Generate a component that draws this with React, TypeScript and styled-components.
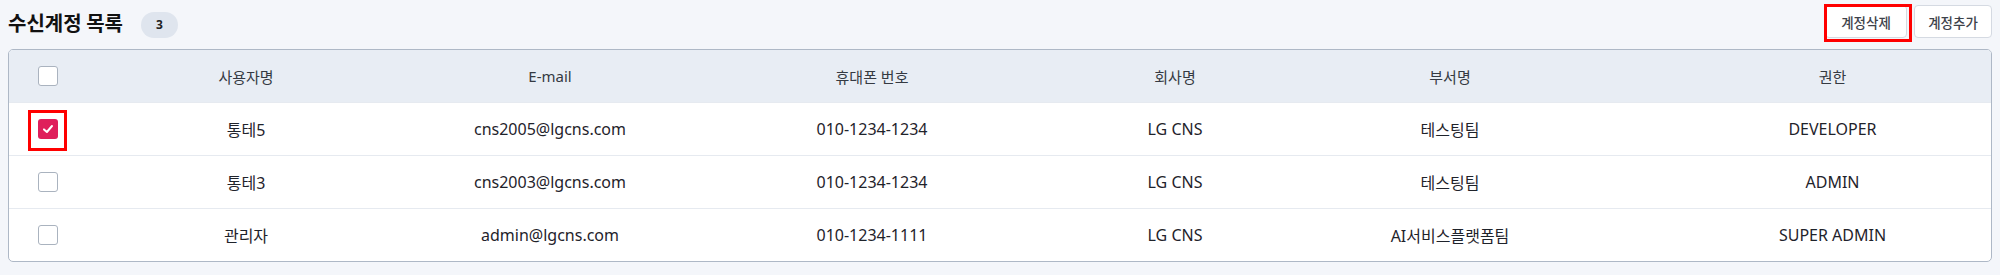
import React, { useState } from "react";
import styled, { createGlobalStyle } from "styled-components";

const GlobalStyle = createGlobalStyle`
  html, body {
    margin: 0;
    padding: 0;
    background: #f4f6fa;
  }
  body {
    font-family: "Noto Sans", "Noto Sans CJK KR", sans-serif;
    color: #222;
  }
`;

const Page = styled.div`
  padding: 4px 8px 0 8px;
`;

const TopBar = styled.div`
  display: flex;
  align-items: center;
  justify-content: space-between;
  height: 35px;
  margin-bottom: 10px;
`;

const TitleGroup = styled.div`
  display: flex;
  align-items: center;
  gap: 18px;
  padding-top: 2px;
`;

const Title = styled.h2`
  margin: 0;
  font-family: "Noto Sans CJK KR", sans-serif;
  font-size: 20px;
  font-weight: 700;
  color: #111;
`;

const CountBadge = styled.span`
  display: inline-flex;
  align-items: center;
  justify-content: center;
  width: 37px;
  height: 26px;
  margin-top: 4px;
  border-radius: 13px;
  background: #dfe5ee;
  font-size: 12px;
  font-weight: 700;
  color: #222;
`;

const ButtonGroup = styled.div`
  display: flex;
  gap: 7px;
`;

const Button = styled.button<{ $width: number }>`
  position: relative;
  height: 33px;
  padding: 0;
  width: ${(p) => p.$width}px;
  border: 1px solid #d5dae2;
  border-radius: 4px;
  background: #fff;
  font-family: "Noto Sans CJK KR", sans-serif;
  font-size: 13.5px;
  font-weight: 500;
  color: #3d424a;
  cursor: pointer;
`;

const Highlight = styled.span<{ $inset: string }>`
  position: absolute;
  inset: ${(p) => p.$inset};
  border: 3px solid #f00;
  pointer-events: none;
`;

const TableBox = styled.div`
  border: 1px solid #aeb8c6;
  border-radius: 5px;
  background: #fff;
  overflow: hidden;
`;

const columns = "71px 332px 276px 368px 238px 312px 1fr";

const HeadRow = styled.div`
  display: grid;
  grid-template-columns: ${columns};
  align-items: center;
  height: 52px;
  background: #e8edf4;
  font-size: 15px;
  color: #353a42;
`;

const BodyRow = styled.div`
  display: grid;
  grid-template-columns: ${columns};
  align-items: center;
  height: 52px;
  border-top: 1px solid #e6eaf0;
  font-size: 16px;
  color: #1f232b;

  &:first-of-type {
    border-top: none;
  }
`;

const Cell = styled.div<{ $padLeft?: number }>`
  text-align: center;
  white-space: nowrap;
  padding-left: ${(p) => p.$padLeft || 0}px;
`;

const CheckCell = styled.div`
  padding-left: 29px;
  display: flex;
  align-items: center;
`;

const Box = styled.span<{ $checked?: boolean }>`
  position: relative;
  display: inline-flex;
  align-items: center;
  justify-content: center;
  box-sizing: border-box;
  width: 20px;
  height: 20px;
  border-radius: 3px;
  border: ${(p) => (p.$checked ? "none" : "1.5px solid #aab3bf")};
  background: ${(p) => (p.$checked ? "#df1f5b" : "#fff")};
  cursor: pointer;
`;

const Check = () => (
  <svg width="14" height="14" viewBox="0 0 14 14" fill="none">
    <path d="M3 7.4 L5.9 10 L11 4" stroke="#fff" strokeWidth="2" strokeLinecap="round" strokeLinejoin="round" />
  </svg>
);

const headers = ["사용자명", "E-mail", "휴대폰 번호", "회사명", "부서명", "권한"];

const users = [
  { id: 1, name: "통테5", email: "cns2005@lgcns.com", phone: "010-1234-1234", company: "LG CNS", dept: "테스팅팀", role: "DEVELOPER" },
  { id: 2, name: "통테3", email: "cns2003@lgcns.com", phone: "010-1234-1234", company: "LG CNS", dept: "테스팅팀", role: "ADMIN" },
  { id: 3, name: "관리자", email: "admin@lgcns.com", phone: "010-1234-1111", company: "LG CNS", dept: "AI서비스플랫폼팀", role: "SUPER ADMIN" },
];

const LAST_PAD = 68;

export default function App() {
  const [selected, setSelected] = useState<number[]>([1]);

  const toggle = (id: number) =>
    setSelected((s) => (s.includes(id) ? s.filter((x) => x !== id) : [...s, id]));

  return (
    <Page>
      <GlobalStyle />
      <TopBar>
        <TitleGroup>
          <Title>수신계정 목록</Title>
          <CountBadge>{users.length}</CountBadge>
        </TitleGroup>
        <ButtonGroup>
          <Button $width={82}>
            계정삭제
            <Highlight $inset="-2px -6px -5px -2px" />
          </Button>
          <Button $width={78}>계정추가</Button>
        </ButtonGroup>
      </TopBar>

      <TableBox>
        <HeadRow>
          <CheckCell>
            <Box />
          </CheckCell>
          {headers.map((h, i) => (
            <Cell key={h} $padLeft={i === headers.length - 1 ? LAST_PAD : 0}>
              {h}
            </Cell>
          ))}
        </HeadRow>
        {users.map((u) => {
          const checked = selected.includes(u.id);
          return (
            <BodyRow key={u.id}>
              <CheckCell>
                <Box $checked={checked} onClick={() => toggle(u.id)}>
                  {checked && <Check />}
                  {u.id === 1 && <Highlight $inset="-9px -9px -12px -10px" />}
                </Box>
              </CheckCell>
              <Cell>{u.name}</Cell>
              <Cell>{u.email}</Cell>
              <Cell>{u.phone}</Cell>
              <Cell>{u.company}</Cell>
              <Cell>{u.dept}</Cell>
              <Cell $padLeft={LAST_PAD}>{u.role}</Cell>
            </BodyRow>
          );
        })}
      </TableBox>
    </Page>
  );
}
